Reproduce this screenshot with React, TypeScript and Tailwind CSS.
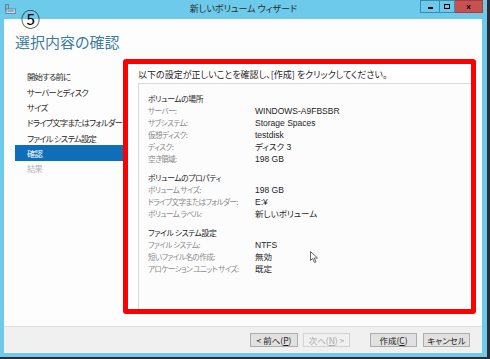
const jp = "font-['Meiryo_UI','Noto_Sans_CJK_JP',sans-serif] [font-feature-settings:'palt']"

const navItems = [
  { label: '開始する前に', state: 'normal' },
  { label: 'サーバーとディスク', state: 'normal' },
  { label: 'サイズ', state: 'normal' },
  { label: 'ドライブ文字またはフォルダー', state: 'normal' },
  { label: 'ファイル システム設定', state: 'normal' },
  { label: '確認', state: 'active' },
  { label: '結果', state: 'disabled' },
]

const sections = [
  {
    title: 'ボリュームの場所',
    rows: [
      ['サーバー:', 'WINDOWS-A9FBSBR'],
      ['サブシステム:', 'Storage Spaces'],
      ['仮想ディスク:', 'testdisk'],
      ['ディスク:', 'ディスク 3'],
      ['空き領域:', '198 GB'],
    ],
  },
  {
    title: 'ボリュームのプロパティ',
    rows: [
      ['ボリューム サイズ:', '198 GB'],
      ['ドライブ文字またはフォルダー:', 'E:¥'],
      ['ボリューム ラベル:', '新しいボリューム'],
    ],
  },
  {
    title: 'ファイル システム設定',
    rows: [
      ['ファイル システム:', 'NTFS'],
      ['短いファイル名の作成:', '無効'],
      ['アロケーション ユニット サイズ:', '既定'],
    ],
  },
]

function WizButton({ children, disabled }: { children: React.ReactNode; disabled?: boolean }) {
  return (
    <div
      className={`h-[14px] flex items-center justify-center border text-[8.5px] leading-none ${
        disabled ? 'border-[#d3d3d3] bg-[#f0f0f0] text-[#a8a8a8]' : 'border-[#adadad] bg-[#e1e1e1] text-[#222]'
      }`}
    >
      {children}
    </div>
  )
}

export default function App() {
  return (
    <div className={`relative w-[490px] h-[359px] overflow-hidden bg-[#2d2d30] ${jp}`}>
      {/* window */}
      <div className="w-[487px] h-[357px] bg-[#6dcaea] flex flex-col">
        {/* title bar */}
        <div className="relative h-[19px] flex items-start">
          <svg className="absolute left-[5px] top-[4px]" width="11" height="10" viewBox="0 0 11 10">
            <rect x="0.5" y="0.5" width="3" height="6" fill="#8fb6cc" stroke="#4f7c98" strokeWidth="0.8" />
            <rect x="1" y="5" width="9.5" height="4.5" fill="#c9dbe6" stroke="#4f7c98" strokeWidth="0.8" />
            <rect x="2.5" y="6.5" width="6" height="1" fill="#4f7c98" />
          </svg>
          <div className="flex-1 pt-[3px] text-center text-[9px] leading-[12px] text-[#2b2b2b]">新しいボリューム ウィザード</div>
          <div className="absolute right-[4px] top-0 flex h-[13px]">
            <div className="w-[19px] h-full border border-[#3e8aa8] border-r-0 flex items-center justify-center">
              <div className="w-[5px] h-[2px] bg-black mt-[3px]" />
            </div>
            <div className="w-[16px] h-full border border-[#3e8aa8] flex items-center justify-center">
              <div className="w-[6px] h-[5px] border-[1.5px] border-black" />
            </div>
            <div className="w-[28px] h-full bg-[#c75050] border border-[#a63c3c] border-l-0 flex items-center justify-center text-[8px] font-bold text-black font-['Liberation_Sans',sans-serif]">
              x
            </div>
          </div>
        </div>

        {/* client */}
        <div className="mx-[4px] mr-[5px] h-[307px] bg-[#fdfdfd] flex flex-col">
          <div className="h-[40px] pl-[11px] pt-[13px] text-[15px] leading-[20px] text-[#3e7e9b]">選択内容の確認</div>
          <div className="flex flex-1">
            <div className="w-[119px] pt-[10px] flex flex-col">
              {navItems.map((n) => (
                <div
                  key={n.label}
                  className={`ml-[11px] h-[15.3px] pl-[12px] flex items-center text-[8.3px] tracking-[-0.75px] whitespace-nowrap ${
                    n.state === 'active'
                      ? 'bg-[#0f6eb8] text-white'
                      : n.state === 'disabled'
                      ? 'text-[#b4b4b4]'
                      : 'text-[#2b2b2b]'
                  }`}
                >
                  {n.label}
                </div>
              ))}
            </div>
            <div className="w-[353px] h-[255px] border-[5px] border-[#ff0000] rounded-[3px] flex flex-col pl-[10px] bg-white">
              <div className="pt-[5px] h-[19px] text-[9px] leading-[12px] text-[#1e1e1e] whitespace-nowrap">
                以下の設定が正しいことを確認し、[作成] をクリックしてください。
              </div>
              <div className="flex-1 border-l border-t border-[#d9d9d9] bg-[#fcfcfc] pl-[9px] pt-[9px]">
                {sections.map((s, i) => (
                  <div key={s.title} className={i > 0 ? 'mt-[7px]' : ''}>
                    <div className="h-[12px] leading-[12px] text-[7.8px] tracking-[-0.4px] text-[#1e1e1e]">{s.title}</div>
                    {s.rows.map(([k, v]) => (
                      <div key={k} className="flex h-[12px] leading-[12px]">
                        <div className="w-[107px] text-[7.6px] tracking-[-0.6px] text-[#8a8a8a] whitespace-nowrap">{k}</div>
                        <div className="text-[#1e1e1e] whitespace-nowrap font-['Liberation_Sans','Noto_Sans_CJK_JP',sans-serif] text-[8.5px]">
                          {v}
                        </div>
                      </div>
                    ))}
                  </div>
                ))}
              </div>
            </div>
          </div>
        </div>

        {/* bottom bar */}
        <div className="mx-[4px] mr-[5px] h-[27px] bg-[#f0f0f0] border-t border-[#dfdfdf] flex items-center">
          <div className="ml-[246px] w-[48px]">
            <WizButton>
              &lt; 前へ(<span className="underline">P</span>)
            </WizButton>
          </div>
          <div className="ml-[5px] w-[47px]">
            <WizButton disabled>
              次へ(<span className="underline">N</span>) &gt;
            </WizButton>
          </div>
          <div className="ml-[20px] w-[47px]">
            <WizButton>
              作成(<span className="underline">C</span>)
            </WizButton>
          </div>
          <div className="ml-[6px] w-[47px]">
            <WizButton>キャンセル</WizButton>
          </div>
        </div>
      </div>

      {/* annotation number */}
      <div className="absolute left-[21px] top-[8px] text-[19px] leading-[22px] text-black font-['Noto_Sans_CJK_JP',sans-serif]">⑤</div>

      {/* mouse cursor */}
      <svg className="absolute left-[310px] top-[251px]" width="10" height="13" viewBox="0 0 10 13">
        <path d="M0.5 0.5 L0.5 9.5 L2.8 7.5 L4.5 11.5 L6 10.8 L4.3 7 L7.5 7 Z" fill="white" stroke="#555" strokeWidth="0.9" strokeLinejoin="round" />
      </svg>
    </div>
  )
}
